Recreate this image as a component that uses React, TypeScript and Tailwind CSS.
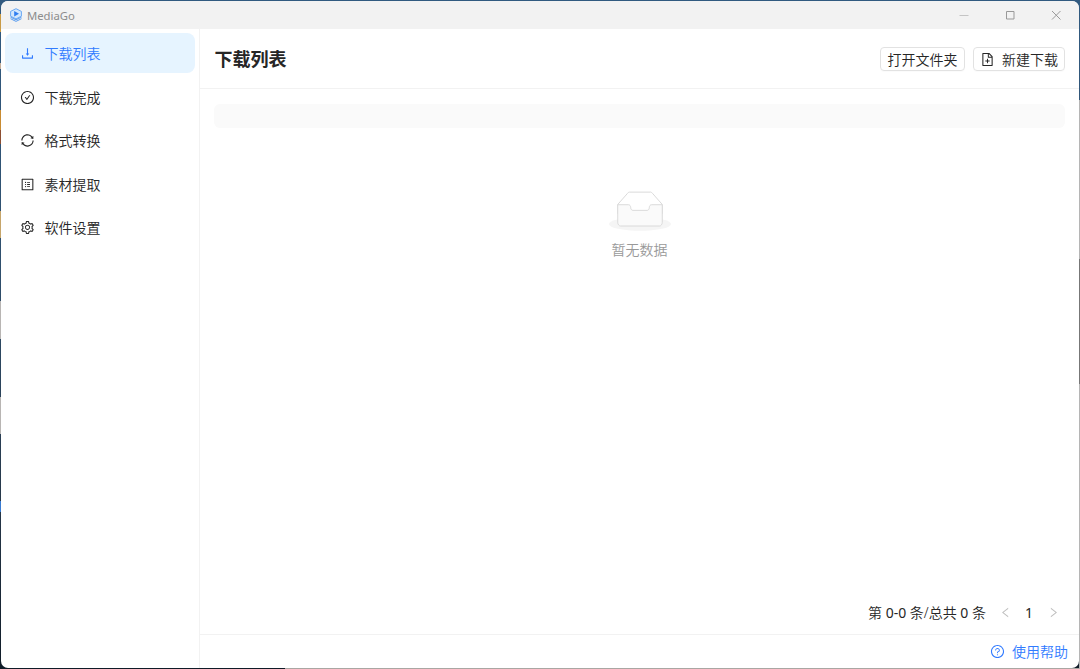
import clsx from "clsx";
import {
  AiOutlineCheckCircle,
  AiOutlineDownload,
  AiOutlineFileAdd,
  AiOutlineLeft,
  AiOutlineProfile,
  AiOutlineQuestionCircle,
  AiOutlineRight,
  AiOutlineSetting,
  AiOutlineSync,
} from "react-icons/ai";

const menuItems = [
  { icon: AiOutlineDownload, label: "下载列表" },
  { icon: AiOutlineCheckCircle, label: "下载完成" },
  { icon: AiOutlineSync, label: "格式转换" },
  { icon: AiOutlineProfile, label: "素材提取" },
  { icon: AiOutlineSetting, label: "软件设置" },
];

function Logo() {
  return (
    <svg width="12" height="14" viewBox="0 0 12 14" fill="none">
      <path d="M6 .7 11.4 3.4v4.8L6 10.9.6 8.2V3.4z" fill="#d3e7fc" stroke="#69a8f3" />
      <path d="M4.2 3v5.4L9 5.7z" fill="#2f7df0" />
      <path d="M.5 9.2 6 11.8l5.5-2.6M.5 10.7 6 13.4l5.5-2.7" stroke="#4b94ef" strokeWidth=".9" />
    </svg>
  );
}

function TitleBar() {
  return (
    <header className="flex h-7 shrink-0 items-center bg-[#f2f2f2] pl-[9px] text-[#8c8c8c]">
      <Logo />
      <span className="ml-[5px] pt-px text-[11.3px] leading-4 font-normal">MediaGo</span>
      <div className="ml-auto flex text-[#999999]">
        <span className="flex w-[46px] items-center justify-center">
          <svg width="10" height="10" viewBox="0 0 10 10" stroke="#c4c4c4">
            <path d="M.5 5.5h9" />
          </svg>
        </span>
        <span className="flex w-[46px] items-center justify-center">
          <svg width="10" height="10" viewBox="0 0 10 10" fill="none" stroke="currentColor">
            <path d="M1.5 1.5h7.5v7.5h-7.5z" />
          </svg>
        </span>
        <span className="flex w-[46px] items-center justify-center">
          <svg width="10" height="10" viewBox="0 0 10 10" fill="none" stroke="currentColor">
            <path d="m1 1 8.5 8.5M9.5 1 1 9.5" />
          </svg>
        </span>
      </div>
    </header>
  );
}

function Sidebar() {
  return (
    <nav className="flex w-[199px] shrink-0 flex-col gap-[3.6px] border-r border-[#f2f2f2] pt-1 pr-1 pl-1">
      {menuItems.map(({ icon: Icon, label }, i) => (
        <a
          key={label}
          className={clsx(
            "flex h-10 shrink-0 items-center gap-[9.5px] rounded-lg pl-[15px]",
            i === 0 ? "bg-[#e6f4ff] text-[#317bff]" : "text-[#262626]"
          )}
        >
          <Icon size={15} className="mt-px" />
          <span className="pt-px">{label}</span>
        </a>
      ))}
    </nav>
  );
}

function EmptyState() {
  return (
    <div className="mt-[62.5px] flex flex-col items-center">
      <svg width="62" height="40" viewBox="0 0 64 41">
        <g transform="translate(0 1)" fill="none">
          <ellipse fill="#f5f5f5" cx="32" cy="33" rx="32" ry="7" />
          <g stroke="#d9d9d9">
            <path d="M55 12.76L44.854 1.258C44.367.474 43.656 0 42.907 0H21.093c-.749 0-1.46.474-1.947 1.257L9 12.761V22h46v-9.24z" />
            <path
              d="M41.613 15.931c0-1.605.994-2.93 2.227-2.931H55v18.137C55 33.26 53.68 35 52.05 35h-40.1C10.32 35 9 33.259 9 31.137V13h11.16c1.233 0 2.227 1.323 2.227 2.928v.022c0 1.605 1.005 2.901 2.237 2.901h14.752c1.232 0 2.237-1.308 2.237-2.913v-.007z"
              fill="#fafafa"
            />
          </g>
        </g>
      </svg>
      <p className="mt-[8.5px] leading-[22px] text-[#999999]">暂无数据</p>
    </div>
  );
}

export default function App() {
  return (
    <div className="flex h-[669px] w-[1080px] bg-[linear-gradient(to_bottom,#315a80_0%,#2f4f6d_40%,#27384a_75%,#101c28_100%)] font-['Noto_Sans','Noto_Sans_CJK_SC',sans-serif] text-[14px] font-[350]">
      {/* Desktop strip left of the window */}
      <div className="flex w-px flex-col">
        <div className="mt-[14px] h-[18px] bg-[#c99a45]" />
        <div className="mt-[31px] h-[6px] bg-[#c4ad98]" />
        <div className="mt-[41px] h-[20px] bg-[#c88b32]" />
        <div className="h-[14px] bg-[#8d4e32]" />
        <div className="mt-[67px] h-[27px] bg-[#c6a56a]" />
        <div className="mt-[63px] h-[38px] bg-[#b8b5b3]" />
        <div className="mt-[58px] h-[37px] bg-[#b8b5b3]" />
        <div className="mt-[67px] h-[11px] bg-[#397bd1]" />
      </div>
      <div className="flex w-[1078px] flex-col">
        <div className="h-px shrink-0" />
        <div className="flex h-[667px] flex-col overflow-hidden rounded-[7px] bg-white">
          <TitleBar />
          <div className="flex min-h-0 flex-1">
            <Sidebar />
            <main className="flex min-w-0 flex-1 flex-col text-[#262626]">
              <div className="flex h-[60px] shrink-0 items-center border-b border-[#f2f2f2] pr-[14px] pl-[14.5px]">
                <h1 className="pt-0.5 text-[18px] font-bold">下载列表</h1>
                <div className="ml-auto flex gap-2">
                  <button className="flex h-6 w-[85px] items-center justify-center rounded border border-[#e2e2e2] shadow-[0_1px_1px_rgba(0,0,0,0.02)]">
                    <span className="pt-0.5">打开文件夹</span>
                  </button>
                  <button className="flex h-6 w-[92px] items-center justify-center gap-[7px] rounded border border-[#e2e2e2] shadow-[0_1px_1px_rgba(0,0,0,0.02)]">
                    <AiOutlineFileAdd size={15} className="mt-px" />
                    <span className="pt-0.5">新建下载</span>
                  </button>
                </div>
              </div>
              <section className="flex flex-1 flex-col pt-[15px] pr-[14px] pl-[14px]">
                <div className="h-6 shrink-0 rounded-md bg-[#fafafa]" />
                <EmptyState />
                <div className="mt-auto mb-[10px] flex h-6 items-center justify-end">
                  <span>
                    第 <span className="font-normal">0-0</span> 条/总共 <span className="font-normal">0</span> 条
                  </span>
                  <span className="ml-[7px] flex w-6 justify-center text-[#bfbfbf]">
                    <AiOutlineLeft size={13} />
                  </span>
                  <span className="w-6 text-center font-normal">1</span>
                  <span className="flex w-6 justify-center text-[#bfbfbf]">
                    <AiOutlineRight size={13} />
                  </span>
                </div>
              </section>
              <footer className="flex h-[34px] shrink-0 items-center justify-end gap-[7px] border-t border-[#f2f2f2] pr-[11px] text-[#317bff]">
                <AiOutlineQuestionCircle size={15} />
                <span>使用帮助</span>
              </footer>
            </main>
          </div>
        </div>
        <div className="flex h-px shrink-0">
          <div className="w-[284px]" />
          <div className="flex-1 bg-[#aaa6a3]" />
        </div>
      </div>
      {/* Desktop strip right of the window */}
      <div className="flex w-px flex-col">
        <div className="mt-[100px] h-[159px] bg-[#b5b5b5]" />
        <div className="h-[125px] bg-[#777777]" />
        <div className="flex-1 bg-[#b5b5b5]" />
      </div>
    </div>
  );
}
